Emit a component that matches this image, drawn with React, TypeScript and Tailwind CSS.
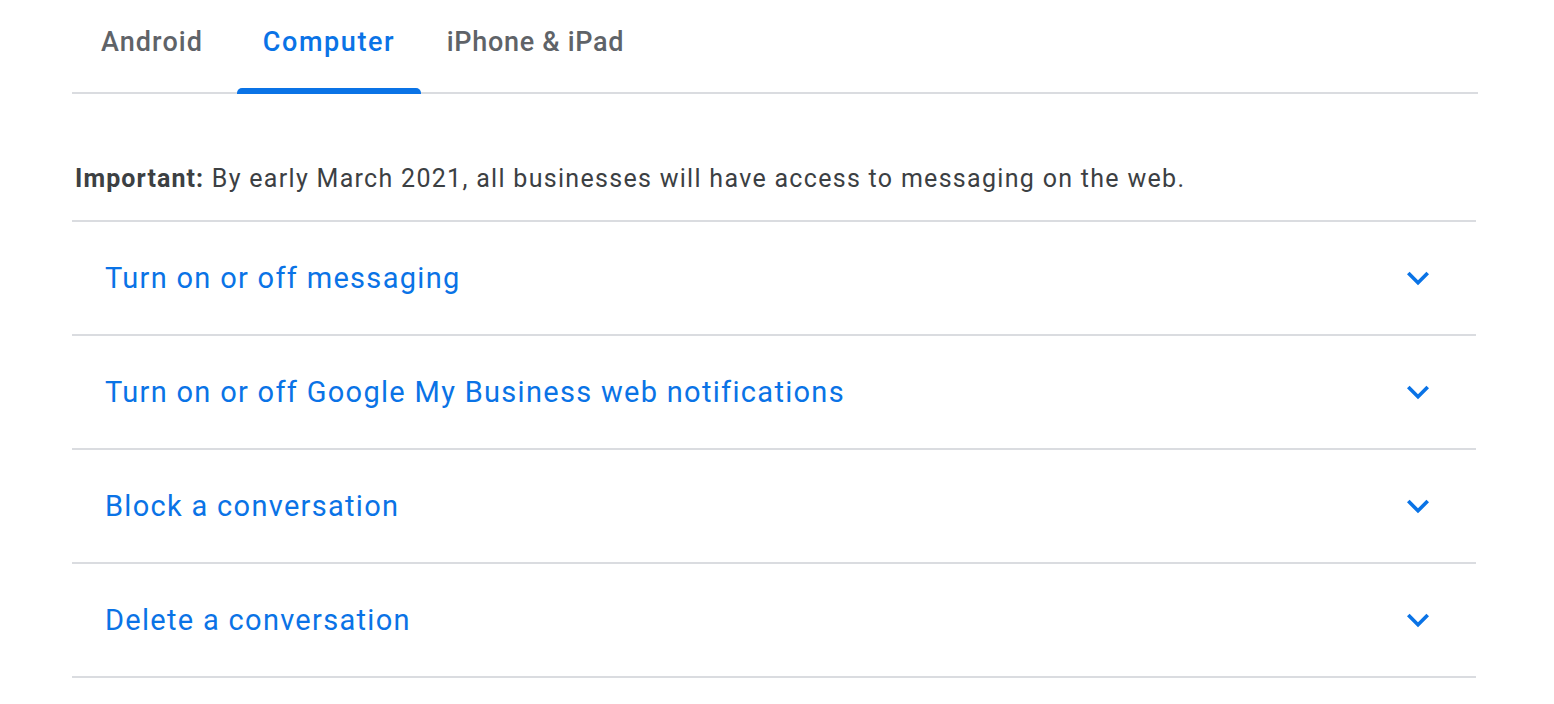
import React from "react";

const Chevron = () => (
  <svg width="44" height="44" viewBox="0 0 24 24" fill="#0a73e6" aria-hidden="true">
    <path d="M16.59 8.59L12 13.17 7.41 8.59 6 10l6 6 6-6z" />
  </svg>
);

const items = [
  "Turn on or off messaging",
  "Turn on or off Google My Business web notifications",
  "Block a conversation",
  "Delete a conversation",
];

export default function App() {
  return (
    <div className="min-h-[704px] bg-white pl-[72px] font-['Roboto','Liberation_Sans',sans-serif]">
      <div className="w-[1406px]">
        {/* Tabs */}
        <div className="relative flex h-[94px] items-start border-b-2 border-[#dadce0]">
          <div className="flex h-[92px] w-[160px] items-center justify-center pb-[8px] text-[27px] font-medium tracking-[1.1px] text-[#5f6368]">
            Android
          </div>
          <div className="relative ml-[5px] flex h-[92px] w-[184px] items-center justify-center pb-[8px] text-[27px] font-medium tracking-[1.6px] text-[#0a73e6]">
            Computer
            <div className="absolute bottom-[-2px] left-0 h-[6px] w-[184px] rounded-t-[5px] bg-[#0a73e6]" />
          </div>
          <div className="flex h-[92px] w-[229px] items-center justify-center pb-[8px] text-[27px] font-medium tracking-[0.7px] text-[#5f6368]">
            iPhone &amp; iPad
          </div>
        </div>

        {/* Important */}
        <div className="w-[1404px]">
          <p className="pl-[3px] pt-[70px] pb-[26px] text-[25px] leading-[30px] tracking-[1.3px] text-[#3c4043]">
            <span className="font-bold tracking-[1.1px]">Important:</span> By early March 2021, all businesses will have access to messaging on the web.
          </p>

          <div className="border-t-2 border-[#dadce0]">
            {items.map((t) => (
              <div
                key={t}
                className="flex h-[114px] items-center justify-between border-b-2 border-[#dadce0] pl-[33px] pr-[36px]"
              >
                <span className="text-[29px] leading-[36px] tracking-[1.3px] text-[#0a73e6]">{t}</span>
                <Chevron />
              </div>
            ))}
          </div>
        </div>
      </div>
    </div>
  );
}
